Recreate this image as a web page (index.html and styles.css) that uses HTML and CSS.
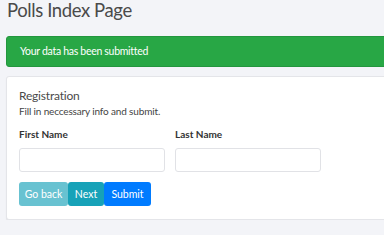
FILE: index.html
```html
<!DOCTYPE html>
<html lang="en">
<head>
    <meta charset="UTF-8">
    <meta name="viewport" content="width=device-width, initial-scale=1.0">
    <title>Polls Index Page</title>
    <link rel="stylesheet" href="styles.css">
</head>
<body>
    <div class="page">
        <h1 class="title">Polls Index Page</h1>
        <div class="alert">Your data has been submitted</div>
        <div class="card">
            <h2 class="card-title">Registration</h2>
            <p class="card-sub">Fill in neccessary info and submit.</p>
            <div class="form-row">
                <div class="field">
                    <label for="firstName">First Name</label>
                    <input type="text" id="firstName">
                </div>
                <div class="field">
                    <label for="lastName">Last Name</label>
                    <input type="text" id="lastName">
                </div>
            </div>
            <div class="buttons">
                <button class="btn btn-back">Go back</button>
                <button class="btn btn-next">Next</button>
                <button class="btn btn-submit">Submit</button>
            </div>
        </div>
    </div>
</body>
</html>
```

FILE: styles.css
```css
body {
    margin: 0;
    background: #f3f4f8;
    font-family: Lato, "Open Sans", sans-serif;
    color: #444;
    overflow: hidden;
}
.page {
    width: 440px;
    padding: 0 6px;
}
.title {
    margin: 0;
    padding: 0 1px;
    font-size: 18.5px;
    font-weight: 400;
    line-height: 20px;
    letter-spacing: -0.4px;
    color: #4a4a4a;
}
.alert {
    margin-top: 16px;
    height: 29px;
    line-height: 29px;
    padding: 0 13px;
    background: #28a745;
    border: 1px solid #23963e;
    border-radius: 3px;
    color: #fff;
    font-size: 10.5px;
    letter-spacing: -0.3px;
}
.card {
    margin-top: 9px;
    background: #fff;
    border: 1px solid #e4e5e9;
    border-radius: 3px;
    box-shadow: 0 1px 1px rgba(0, 0, 0, 0.08);
    padding: 11px 12px 13px;
}
.card-title {
    margin: 0;
    font-size: 12px;
    font-weight: 400;
    line-height: 16px;
    letter-spacing: -0.2px;
    color: #4a4a4a;
}
.card-sub {
    margin: 0;
    font-size: 10px;
    line-height: 14px;
    letter-spacing: -0.15px;
}
.form-row {
    display: flex;
    gap: 10px;
    margin-top: 10px;
}
.field label {
    display: block;
    font-size: 10px;
    font-weight: 700;
    color: #333;
    line-height: 13px;
    margin-bottom: 7px;
}
.field input {
    width: 146px;
    height: 24px;
    box-sizing: border-box;
    border: 1px solid #e1e2e6;
    border-radius: 3px;
    margin: 0;
}
.buttons {
    display: flex;
    margin-top: 10px;
}
.btn {
    height: 24px;
    border: none;
    color: #fff;
    font-family: Lato, "Open Sans", sans-serif;
    font-size: 10.5px;
    padding: 0;
    border-radius: 3px;
}
.btn-back {
    width: 49px;
    background: #68c2d1;
}
.btn-next {
    width: 36px;
    background: #17a2b8;
}
.btn-submit {
    width: 47px;
    background: #007bff;
}
```
